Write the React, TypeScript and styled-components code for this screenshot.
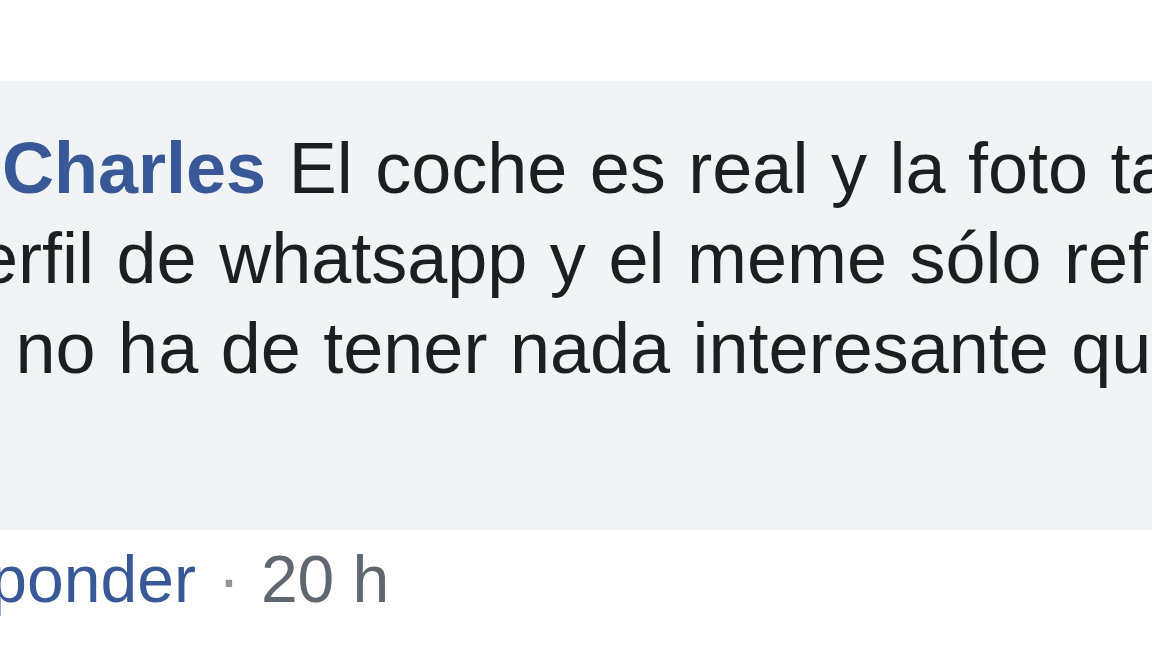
import styled, { createGlobalStyle } from "styled-components"

const GlobalStyle = createGlobalStyle`
  html, body {
    margin: 0;
    padding: 0;
    background: #ffffff;
    overflow: hidden;
  }
  body {
    font-family: "Liberation Sans", Arial, Helvetica, sans-serif;
  }
`

const LINES = [
  { offset: 2, name: "Charles", text: " El coche es real y la foto también es real" },
  { offset: -62, name: "", text: "perfil de whatsapp y el meme sólo refleja" },
  { offset: -43, name: "", text: "y no ha de tener nada interesante que contar" },
]

export default function App() {
  return (
    <Page>
      <GlobalStyle />
      <Bubble>
        {LINES.map((line, i) => (
          <Line key={i} $offset={line.offset}>
            {line.name && <Author>{line.name}</Author>}
            {line.text}
          </Line>
        ))}
      </Bubble>
      <Actions>
        <ActionLink>Responder</ActionLink>
        <Dot aria-hidden="true">·</Dot>
        <Time>20 h</Time>
      </Actions>
    </Page>
  )
}

const Page = styled.div`
  width: 1152px;
  height: 648px;
  overflow: hidden;
  padding-top: 81px;
  box-sizing: border-box;
`

const Bubble = styled.div`
  height: 449px;
  box-sizing: border-box;
  padding-top: 42px;
  background-color: #f2f3f5;
  overflow: hidden;
`

const Line = styled.div<{ $offset: number }>`
  margin-left: ${(p) => p.$offset}px;
  font-size: 72px;
  line-height: 90px;
  word-spacing: 2.5px;
  color: #1c1e21;
  white-space: nowrap;
`

const Author = styled.span`
  font-weight: bold;
  color: #385898;
`

const Actions = styled.div`
  display: flex;
  align-items: baseline;
  margin-top: 9px;
  margin-left: -127px;
  font-size: 66px;
  line-height: 80px;
  white-space: nowrap;
`

const ActionLink = styled.span`
  color: #385898;
`

const Dot = styled.span`
  color: #90949c;
  margin: 0 21px 0 22px;
`

const Time = styled.span`
  color: #606770;
`
